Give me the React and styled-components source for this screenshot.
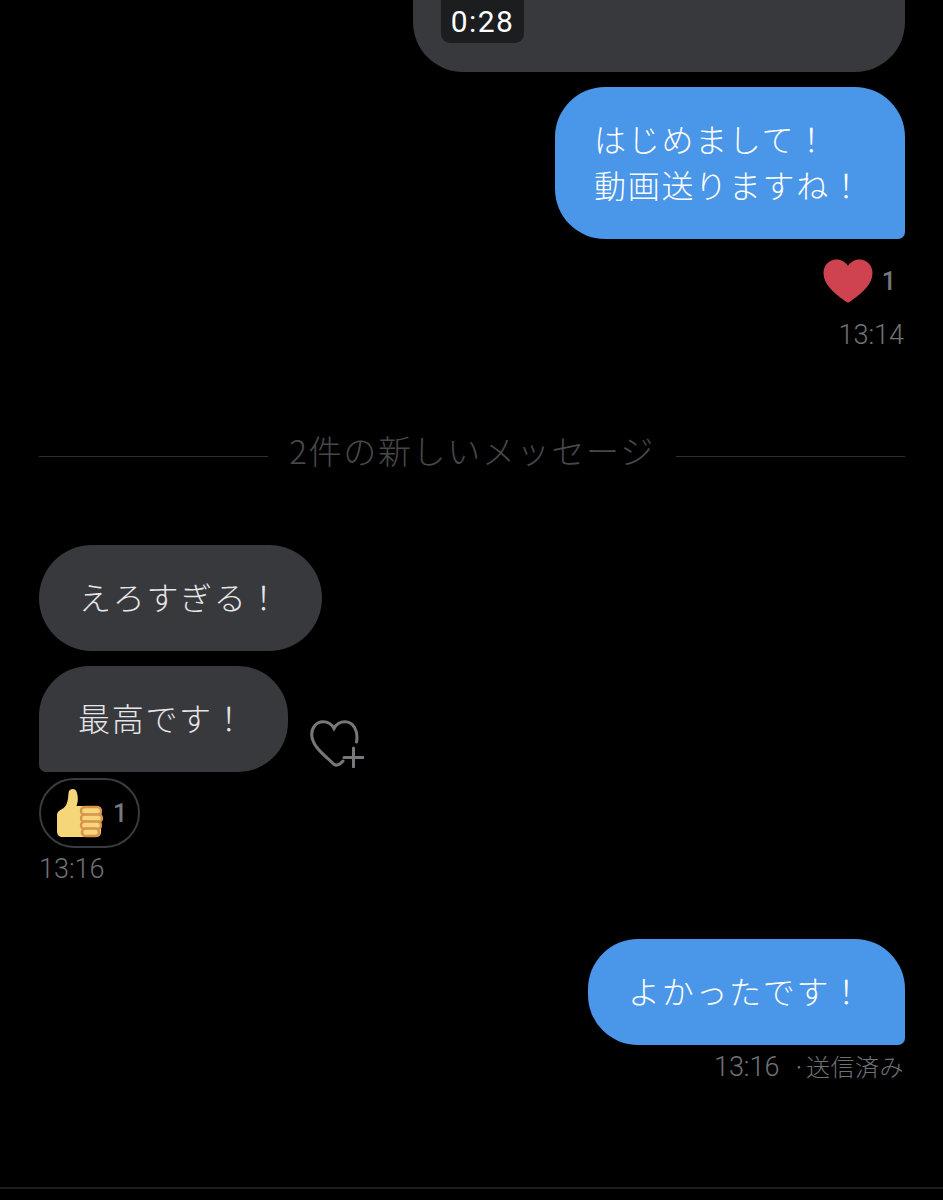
import React from 'react';
import styled, { createGlobalStyle } from 'styled-components';

const GlobalStyle = createGlobalStyle`
  html, body {
    margin: 0;
    padding: 0;
    background: #000;
  }
  body {
    font-family: 'Noto Sans CJK JP', 'Noto Sans', sans-serif;
  }
`;

const Screen = styled.div`
  width: 943px;
  height: 1200px;
  box-sizing: border-box;
  padding: 0 38px 0 39px;
  background: #000;
  display: flex;
  flex-direction: column;
  overflow: hidden;
`;

const VideoBubble = styled.div`
  align-self: flex-end;
  width: 492px;
  height: 72px;
  flex: none;
  box-sizing: border-box;
  padding-left: 28px;
  background: #38393d;
  border-radius: 0 0 50px 50px;
`;

const Duration = styled.div`
  width: 83px;
  height: 43px;
  background: #1c1d1f;
  border-radius: 0 0 9px 9px;
  color: #fff;
  font-family: Roboto, 'Liberation Sans', sans-serif;
  font-size: 30px;
  line-height: 43px;
  letter-spacing: 1.4px;
  text-align: center;
`;

const Bubble = styled.div`
  flex: none;
  box-sizing: border-box;
  width: ${(p) => p.$width}px;
  margin-top: ${(p) => p.$top}px;
  padding: 30px 0 30px ${(p) => p.$inset}px;
  align-self: ${(p) => (p.$mine ? 'flex-end' : 'flex-start')};
  background: ${(p) => (p.$mine ? '#4a96e8' : '#38393d')};
  color: ${(p) => (p.$mine ? '#fff' : '#e6e6e8')};
  border-radius: ${(p) => {
    if (p.$tail === 'right') return '50px 50px 7px 50px';
    if (p.$tail === 'left') return '50px 50px 50px 7px';
    return '53px';
  }};
  font-size: 32px;
  font-weight: 300;
  line-height: 46px;
  letter-spacing: 1.7px;
  white-space: nowrap;
`;

const BubbleText = styled.div`
  margin-top: -2px;
  margin-bottom: 2px;
`;

const ReactionRow = styled.div`
  align-self: flex-end;
  height: 44px;
  margin: 20px 9px 0 0;
  display: flex;
  align-items: center;
  gap: 9px;
  color: #77787c;
  font-family: Roboto, 'Liberation Sans', sans-serif;
  font-size: 25px;
  font-weight: 500;
`;

const Time = styled.div`
  align-self: ${(p) => (p.$mine ? 'flex-end' : 'flex-start')};
  margin-top: ${(p) => p.$top}px;
  margin-right: ${(p) => (p.$mine ? 1 : 0)}px;
  color: #717275;
  font-family: Roboto, 'Liberation Sans', sans-serif;
  font-size: 27px;
  font-weight: 300;
  line-height: 30px;
  display: flex;
  align-items: baseline;
`;

const SentLabel = styled.span`
  margin-left: 13px;
  font-family: 'Noto Sans CJK JP', sans-serif;
  font-size: 24px;
  letter-spacing: 0.5px;
`;

const Divider = styled.div`
  margin-top: 79px;
  height: 42px;
  display: flex;
  align-items: center;
  gap: 21px;
  color: #47484b;
  font-size: 33px;
  font-weight: 300;
  letter-spacing: 1.7px;
  line-height: 42px;
  white-space: nowrap;

  &::before,
  &::after {
    content: '';
    flex: 1;
    height: 1px;
    margin-top: 12px;
    background: #2e2f31;
  }
`;

const BubbleWithAction = styled.div`
  align-self: flex-start;
  display: flex;
  align-items: flex-end;
  gap: 22px;
`;

const AddReaction = styled.svg`
  width: 54px;
  height: 48px;
  margin-bottom: 4px;
  flex: none;
`;

const ReactionPill = styled.div`
  align-self: flex-start;
  box-sizing: border-box;
  width: 101px;
  height: 70px;
  margin-top: 6px;
  padding: 0 0 0 15px;
  border: 2px solid #3a3b3e;
  border-radius: 35px;
  display: flex;
  align-items: center;
  gap: 9px;
  color: #77787c;
  font-family: Roboto, 'Liberation Sans', sans-serif;
  font-size: 25px;
  font-weight: 500;
`;

const BottomRule = styled.div`
  margin: auto -39px 11px;
  height: 2px;
  background: #1d1e20;
`;

function HeartIcon() {
  return (
    <svg width="50" height="44" viewBox="0 0 50 44" aria-hidden="true">
      <path
        fill="#cf4350"
        d="M25 43.500C23.500 43.500 22 42 20 40.500 10 33 0.500 25 0.500 14 0.500 6 6.500 0.500 13.500 0.500 18.500 0.500 22.500 3 25 7 27.500 3 31.500 0.500 36.500 0.500 43.500 0.500 49.500 6 49.500 14 49.500 25 40 33 30 40.500 28 42 26.500 43.500 25 43.500Z"
      />
    </svg>
  );
}

function ThumbIcon() {
  return (
    <svg width="48" height="50" viewBox="0 0 48 50" aria-hidden="true">
      <path
        fill="#f5d678"
        d="M1 27C1 24 3 22.500 6 21 10 19 12 15 12.500 5 12.700 0.500 19 -0.500 20.500 3.500 22.500 9 22 14 20.500 18L40 18C44 18 45.500 20 45.500 23L45 44C45 47 43 49 40 49L7 49C3 49 1 47 1 43Z"
      />
      <g fill="#f5d678" stroke="#d8944f" strokeWidth="2.400">
        <rect x="25" y="19" width="20" height="8" rx="4" />
        <rect x="25" y="26.500" width="21" height="7.500" rx="3.700" />
        <rect x="25" y="33.500" width="20" height="7.500" rx="3.700" />
        <rect x="26" y="40.500" width="17" height="7.500" rx="3.500" />
      </g>
    </svg>
  );
}

export default function App() {
  return (
    <>
      <GlobalStyle />
      <Screen>
        <VideoBubble>
          <Duration>0:28</Duration>
        </VideoBubble>

        <Bubble $mine $tail="right" $width={350} $inset={39} $top={15}>
          <BubbleText>
            はじめまして！
            <br />
            動画送りますね！
          </BubbleText>
        </Bubble>
        <ReactionRow>
          <HeartIcon />
          <span>1</span>
        </ReactionRow>
        <Time $mine $top={17}>13:14</Time>

        <Divider>2件の新しいメッセージ</Divider>

        <Bubble $width={283} $inset={40} $top={74}>
          <BubbleText>えろすぎる！</BubbleText>
        </Bubble>
        <BubbleWithAction>
          <Bubble $tail="left" $width={249} $inset={39} $top={15}>
            <BubbleText>最高です！</BubbleText>
          </Bubble>
          <AddReaction viewBox="0 0 54 48" fill="none" stroke="#77787c" strokeWidth="3" strokeLinecap="round" aria-hidden="true">
            <path d="M46.500 22C48.500 11 43.500 1.700 35 1.700 30 1.700 26 4.500 24 8.500 22 4.500 18 1.700 13 1.700 6.500 1.700 1.700 7.500 1.700 14.500 1.700 27 17 37 23.500 44 26 46 29 45.500 33 41" />
            <path d="M34 37.500H53M43.500 28V47" />
          </AddReaction>
        </BubbleWithAction>
        <ReactionPill>
          <ThumbIcon />
          <span>1</span>
        </ReactionPill>
        <Time $top={6}>13:16</Time>

        <Bubble $mine $tail="right" $width={317} $inset={40} $top={55}>
          <BubbleText>よかったです！</BubbleText>
        </Bubble>
        <Time $mine $top={6}>
          13:16
          <SentLabel>·送信済み</SentLabel>
        </Time>

        <BottomRule />
      </Screen>
    </>
  );
}
